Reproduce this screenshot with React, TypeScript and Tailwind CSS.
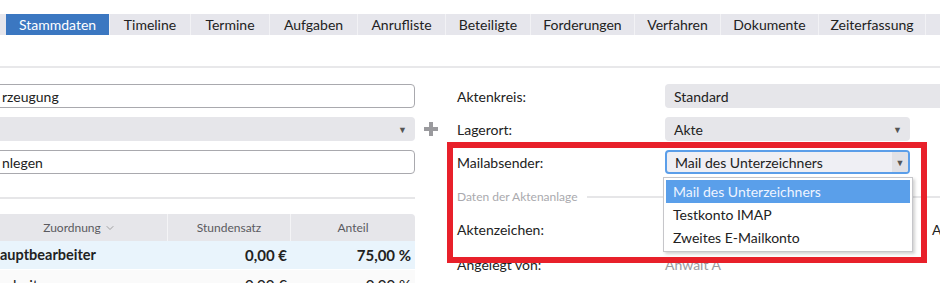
import { ChevronDown } from 'lucide-react';

const tabs = [
    { label: 'Stammdaten', w: 'w-[103px]' },
    { label: 'Timeline', w: 'w-[81px]' },
    { label: 'Termine', w: 'w-[79px]' },
    { label: 'Aufgaben', w: 'w-[88px]' },
    { label: 'Anrufliste', w: 'w-[88px]' },
    { label: 'Beteiligte', w: 'w-[85px]' },
    { label: 'Forderungen', w: 'w-[104px]' },
    { label: 'Verfahren', w: 'w-[86px]' },
    { label: 'Dokumente', w: 'w-[98px]' },
    { label: 'Zeiterfassung', w: 'w-[107px]' },
];

const options = ['Mail des Unterzeichners', 'Testkonto IMAP', 'Zweites E-Mailkonto'];

function Arrow() {
    return <span className="text-[9px] leading-none text-[#555]">▼</span>;
}

export default function App() {
    return (
        <div className="relative h-[283px] w-[940px] overflow-hidden bg-white font-['Lato',sans-serif] text-[14px] text-[#222]">
            {/* tab bar */}
            <nav className="mt-[14px] flex h-[21px] bg-[#e6e6ec] pl-[6px]">
                {tabs.map((tab, index) => (
                    <div
                        key={tab.label}
                        className={
                            index === 0
                                ? `${tab.w} flex items-center justify-center bg-[#3b77c1] text-white`
                                : `${tab.w} flex items-center justify-center border-l border-[#f2f2f5]`
                        }
                    >
                        {tab.label}
                    </div>
                ))}
                <div className="flex-1 border-l border-[#f2f2f5]" />
            </nav>

            <div className="mt-[31px] h-[2px] bg-[#e8e8ea]" />

            <div className="mt-[16px] flex">
                {/* left column */}
                <div className="-ml-[8px] w-[423px] shrink-0">
                    <div className="flex flex-col gap-[9px]">
                        <div className="flex h-[24px] items-center rounded-[4px] border border-[#a9a9ae] px-[9px]">rzeugung</div>
                        <div className="flex h-[24px] items-center justify-end rounded-[4px] bg-[#e6e6ea] pr-[8px]">
                            <Arrow />
                        </div>
                        <div className="flex h-[24px] items-center rounded-[4px] border border-[#a9a9ae] px-[9px]">nlegen</div>
                    </div>
                    <div className="ml-[8px] mt-[23px] h-[2px] bg-[#e6e6e8]" />

                    <div className="mt-[15px] overflow-hidden rounded-tr-[4px]">
                        <div className="flex h-[27px] bg-[#e6e6ea] text-[12px] text-[#5a5a60]">
                            <div className="flex w-[176px] items-center justify-center gap-[3px] border-r border-[#f4f4f6]">
                                Zuordnung <ChevronDown size={12} strokeWidth={1.5} className="text-[#888]" />
                            </div>
                            <div className="flex w-[123px] items-center justify-center border-r border-[#f4f4f6]">Stundensatz</div>
                            <div className="flex w-[124px] items-center justify-center">Anteil</div>
                        </div>
                        <div className="flex h-[29px] items-center border-b border-white bg-[#e9f4fc] text-[15px] font-bold">
                            <div className="w-[176px] pl-[8px] text-[14.5px]">auptbearbeiter</div>
                            <div className="w-[123px] pr-[4px] text-right">0,00 €</div>
                            <div className="w-[124px] pr-[4px] text-right">75,00 %</div>
                        </div>
                        <div className="flex h-[29px] bg-[#fafafa] pt-[4px] text-[15px]">
                            <div className="w-[176px] pl-[8px]">arbeiter</div>
                            <div className="w-[123px] pr-[4px] text-right">0,00 €</div>
                            <div className="w-[124px] pr-[4px] text-right">0,00 %</div>
                        </div>
                    </div>
                </div>

                {/* add button */}
                <div className="flex w-[32px] shrink-0 flex-col pt-[33px]">
                    <div className="flex h-[24px] items-center justify-center">
                        <svg width="14" height="14" viewBox="0 0 14 14">
                            <path d="M5 0h4v5h5v4H9v5H5V9H0V5h5z" fill="#9a9a9e" />
                        </svg>
                    </div>
                </div>

                {/* right column */}
                <div className="flex-1 pl-[10px]">
                    <div className="flex flex-col gap-[9px]">
                        <div className="flex h-[24px] items-center">
                            <div className="w-[208px] shrink-0">Aktenkreis:</div>
                            <div className="flex h-full flex-1 items-center rounded-l-[4px] bg-[#e6e6ea] pl-[9px] -mr-[10px]">Standard</div>
                        </div>
                        <div className="flex h-[24px] items-center">
                            <div className="w-[208px] shrink-0">Lagerort:</div>
                            <div className="flex h-full w-[245px] items-center justify-between rounded-[4px] bg-[#e6e6ea] pl-[9px] pr-[8px]">
                                Akte <Arrow />
                            </div>
                        </div>
                        <div className="flex h-[24px] items-center">
                            <div className="w-[208px] shrink-0">Mailabsender:</div>
                            <div className="flex h-full w-[245px] items-center justify-between overflow-hidden rounded-[4px] border-2 border-[#5b9ee9] bg-[#efeff4] pl-[8px]">
                                Mail des Unterzeichners
                                <div className="flex h-full w-[16px] items-center justify-center bg-[#e1e1e6]">
                                    <Arrow />
                                </div>
                            </div>
                        </div>
                    </div>

                    <div className="mt-[17px] flex h-[12px] items-center">
                        <span className="text-[12px] text-[#aaaaae]">Daten der Aktenanlage</span>
                        <div className="ml-[9px] h-[2px] flex-1 bg-[#e6e6e8]" />
                    </div>

                    <div className="mt-[14px] flex h-[24px] items-center">
                        <div className="w-[208px] shrink-0">Aktenzeichen:</div>
                        <div className="w-[267px]" />
                        <div>A</div>
                    </div>
                    <div className="mt-[11px] flex h-[24px] items-center">
                        <div className="w-[208px] shrink-0">Angelegt von:</div>
                        <div className="text-[#9a9a9e]">Anwalt A</div>
                    </div>
                </div>
            </div>

            {/* open select list */}
            <div className="absolute left-[663px] top-[177px] w-[250px] border border-[#c6c6ca] bg-white p-[2px] shadow-[2px_2px_3px_rgba(0,0,0,0.18)]">
                {options.map((option, index) => (
                    <div
                        key={option}
                        className={
                            index === 0
                                ? 'flex h-[23px] items-center bg-[#5a9fea] pl-[7px] text-[#eef4ff]'
                                : 'flex h-[23px] items-center pl-[7px]'
                        }
                    >
                        {option}
                    </div>
                ))}
            </div>

            {/* highlight frame */}
            <div className="pointer-events-none absolute left-[447px] top-[142px] h-[121px] w-[480px] border-[6px] border-[#e8202a]" />
        </div>
    );
}
